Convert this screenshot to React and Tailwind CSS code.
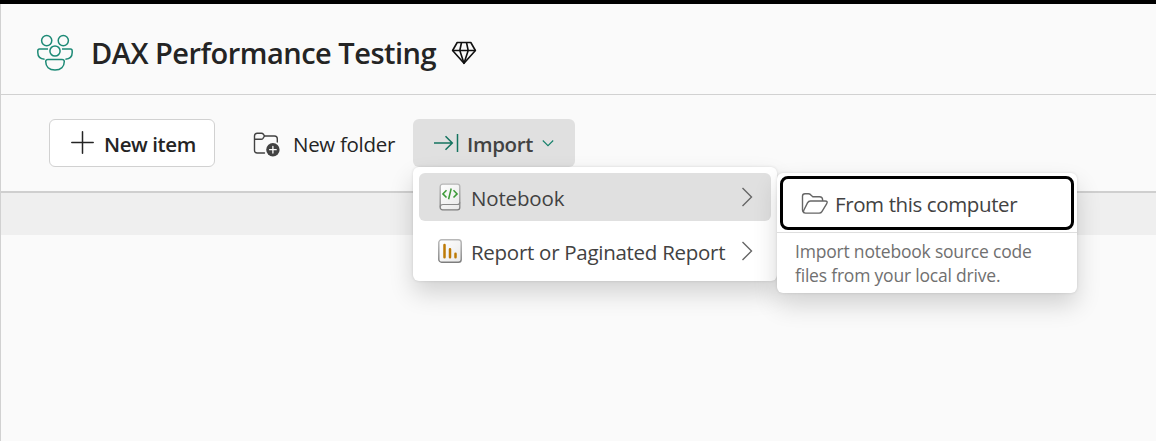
function PeopleIcon() {
  return (
    <svg className="block shrink-0" width="38" height="38" viewBox="0 0 38 38" fill="none" stroke="#1d8a76" strokeWidth="1.5">
      <circle cx="10.7" cy="6.6" r="5.1" />
      <circle cx="27.3" cy="6.6" r="5.1" />
      <circle cx="19" cy="17" r="5.1" />
      <path d="M12 15H3.5Q1.8 15 1.8 17V18.5C1.8 22.5 4.5 25 8.6 25.2" />
      <path d="M26 15H34.5Q36.2 15 36.2 17V18.5C36.2 22.5 33.5 25 29.4 25.2" />
      <path d="M12 25.4H26Q28.3 25.4 28.3 27.6C28.3 32.6 25 36 19 36S9.7 32.6 9.7 27.6Q9.7 25.4 12 25.4Z" />
    </svg>
  );
}

function DiamondIcon() {
  return (
    <svg className="block shrink-0" width="26" height="24" viewBox="0 0 26 24" fill="none" stroke="#111" strokeWidth="1.6" strokeLinejoin="round">
      <path d="M6.2 1.5H19.8L24.4 9.5L13 22.3L1.6 9.5Z" />
      <path d="M1.6 9.5H24.4M10.5 1.5L8.8 9.5L13 22.3L17.2 9.5L15.5 1.5" />
    </svg>
  );
}

function NewFolderIcon() {
  return (
    <svg className="block shrink-0" width="28" height="26" viewBox="0 0 28 26" fill="none" stroke="#424242" strokeWidth="1.4" strokeLinecap="round">
      <path d="M11.5 21H4.2Q1.5 21 1.5 18.2V4Q1.5 1.2 4.3 1.2H8.5Q9.6 1.2 10.4 2.2L11.5 4H21.5Q24.3 4 24.3 6.8V10" />
      <path d="M1.7 7.3H8.2Q9.3 7.3 10 6.4L11.5 4" />
      <circle cx="19.9" cy="17.7" r="6.7" fill="#424242" stroke="none" />
      <path d="M19.9 14.4V21M16.6 17.7H23.2" stroke="#fff" strokeWidth="1.3" />
    </svg>
  );
}

function NotebookIcon() {
  return (
    <svg className="block shrink-0" width="24" height="28" viewBox="0 0 24 28" fill="none">
      <defs>
        <linearGradient id="paper" x1="0" y1="0" x2="1" y2="1">
          <stop stopColor="#fff" />
          <stop offset="1" stopColor="#e9e9e9" />
        </linearGradient>
        <linearGradient id="edge" x1="0" y1="0" x2="0" y2="1">
          <stop stopColor="#b8b8b8" />
          <stop offset="1" stopColor="#7d7d7d" />
        </linearGradient>
      </defs>
      <rect x="2.2" y="1.2" width="19.6" height="25.6" rx="2.4" fill="url(#paper)" stroke="url(#edge)" strokeWidth="1.3" />
      <path d="M2.2 24.2Q2.2 21.5 5 21.5H19.4Q21.8 21.5 21.8 19.2" stroke="#8a8a8a" strokeWidth="1.2" />
      <path d="M8.5 7.3L4.9 10.9L8.5 14.5M15.5 7.3L19.1 10.9L15.5 14.5M13.2 5.5L10.6 16.2" stroke="#3c9a38" strokeWidth="1.5" />
    </svg>
  );
}

function ReportIcon() {
  return (
    <svg className="block shrink-0" width="24" height="24" viewBox="0 0 24 24" fill="none">
      <rect x=".8" y=".8" width="22.4" height="22.4" rx="2.8" fill="url(#paper)" stroke="url(#edge)" strokeWidth="1.4" />
      <path d="M6.5 6V18.2M12 10.2V18.2M17.5 14.7V18.2" stroke="#bd7a05" strokeWidth="2.5" strokeLinecap="round" />
    </svg>
  );
}

function OpenFolderIcon() {
  return (
    <svg className="block shrink-0" width="28" height="24" viewBox="0 0 28 24" fill="none" stroke="#666" strokeWidth="1.4" strokeLinejoin="round">
      <path d="M3.2 20.8Q1.5 20 1.5 18V4.2Q1.5 1.7 4 1.7H7.5Q8.5 1.7 9.3 2.4L11.8 4.7H18.5Q21.6 4.7 21.6 7.8V9" />
      <path d="M9.5 9H24Q27.3 9 25.6 11.8L20.9 19.6Q20 21.1 18.2 21.1H4.7Q1.6 21.1 2.8 18.3L6.5 10.9Q7.5 9 9.5 9Z" />
    </svg>
  );
}

function ChevronRight() {
  return (
    <svg className="ml-auto block shrink-0" width="12" height="20" viewBox="0 0 12 20" fill="none" stroke="#666" strokeWidth="1.4">
      <path d="M1.5 1L10.5 10L1.5 19" />
    </svg>
  );
}

function SubMenu() {
  return (
    <div className="absolute left-[364px] top-[6px] h-[120px] w-[300px] rounded-md bg-white shadow-[0_0_3px_rgba(0,0,0,0.12),0_12px_24px_rgba(0,0,0,0.16)]">
      <div className="h-[60px] border-b border-[#dedede] px-[3px] pt-[3px]">
        <button className="flex h-[54px] w-[294px] items-center rounded-lg border-[3px] border-black pl-[18px] text-left text-[#424242]">
          <div className="pt-[2px]">
            <OpenFolderIcon />
          </div>
          <span className="ml-[6px] pt-px text-[20.5px] leading-7 whitespace-nowrap tracking-[-0.39px]">From this computer</span>
        </button>
      </div>
      <p className="pt-[6px] pl-[18px] text-[17.5px] leading-6 whitespace-nowrap tracking-[-0.2px] text-[#707070]">
        Import notebook source code
        <br />
        files from your local drive.
      </p>
    </div>
  );
}

function ImportMenu() {
  return (
    <div className="absolute top-12 left-0 z-10 h-[114px] w-[364px] rounded-md bg-white p-[6px] text-[#424242] shadow-[0_0_3px_rgba(0,0,0,0.12),0_12px_24px_rgba(0,0,0,0.16)]">
      <div className="flex h-12 w-[352px] items-center rounded-md bg-[#e0e0e0] pr-[18px] pl-[19px]">
        <NotebookIcon />
        <span className="ml-[9px] pt-px text-[20.5px] leading-7 whitespace-nowrap tracking-[-0.16px]">Notebook</span>
        <ChevronRight />
      </div>
      <div className="mt-[6px] flex h-12 w-[352px] items-center pr-[18px] pl-[19px]">
        <ReportIcon />
        <span className="ml-[9px] pt-px text-[20.5px] leading-7 whitespace-nowrap tracking-[-0.28px]">Report or Paginated Report</span>
        <ChevronRight />
      </div>
      <SubMenu />
    </div>
  );
}

export default function App() {
  return (
    <div className="h-[441px] w-[1156px] overflow-hidden border-t-4 border-black bg-[#fafafa] font-['Open_Sans','Noto_Sans',sans-serif] text-[#242424]">
      <div className="h-full border-l border-[#d1d1d1]">
        <header className="flex h-[91px] items-center border-b border-[#d1d1d1] pt-[7px] pl-[35px]">
          <PeopleIcon />
          <h1 className="ml-[17px] w-[346px] pt-px text-[29px] leading-10 font-semibold whitespace-nowrap tracking-[-0.5px]">DAX Performance Testing</h1>
          <div className="ml-[14px]">
            <DiamondIcon />
          </div>
        </header>
        <div className="flex h-[98px] items-start border-b-2 border-[#cfcfcf] pt-6 pl-12">
          <button className="flex h-12 w-[166px] items-center rounded-md border border-[#d1d1d1] bg-white pl-[21px]">
            <svg className="mb-[2px] block shrink-0" width="23" height="23" viewBox="0 0 23 23" stroke="#242424" strokeWidth="1.5" strokeLinecap="round">
              <path d="M11.5 .8V22.2M.8 11.5H22.2" />
            </svg>
            <span className="ml-[10px] pt-px text-[20.5px] leading-7 font-semibold whitespace-nowrap tracking-[-0.4px]">New item</span>
          </button>
          <button className="ml-[38px] flex h-12 w-[160px] items-center">
            <div className="pt-[3px]">
              <NewFolderIcon />
            </div>
            <span className="ml-[12px] pt-px text-[20.5px] leading-7 whitespace-nowrap tracking-[-0.3px]">New folder</span>
          </button>
          <div className="relative">
            <button className="flex h-12 w-[162px] items-center rounded-md bg-[#e0e0e0] pl-[20px] text-[#424242]">
              <svg className="block shrink-0" width="26" height="20" viewBox="0 0 26 20" fill="none" stroke="#14735f" strokeWidth="1.5">
                <path d="M1 10H19M12.5 3.2L19.3 10L12.5 16.8M24.5 1V19" />
              </svg>
              <span className="ml-[8px] w-[66px] pt-px text-[20.5px] leading-7 font-semibold whitespace-nowrap tracking-[-0.35px]">Import</span>
              <svg className="ml-[9px] block shrink-0" width="12" height="8" viewBox="0 0 12 8" fill="none" stroke="#14806a" strokeWidth="1.1">
                <path d="M.8 1.5L6 6.7L11.2 1.5" />
              </svg>
            </button>
            <ImportMenu />
          </div>
        </div>
        <div className="h-[42px] bg-[#efefef]" />
      </div>
    </div>
  );
}
